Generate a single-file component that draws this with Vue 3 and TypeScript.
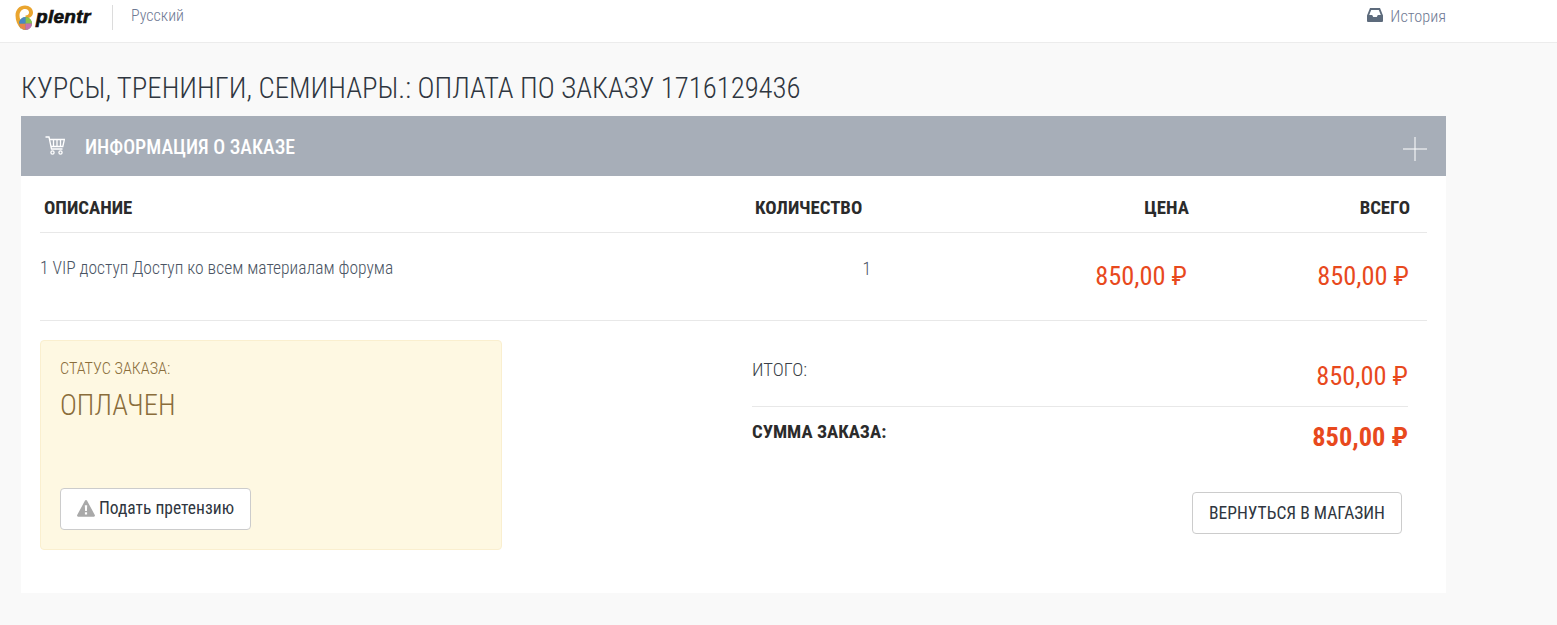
<script setup lang="ts">
import { ref } from 'vue'

interface OrderItem {
  name: string
  qty: number
  price: string
  total: string
}

const orderNumber = ref('1716129436')
const items = ref<OrderItem[]>([
  { name: '1 VIP доступ Доступ ко всем материалам форума', qty: 1, price: '850,00 ₽', total: '850,00 ₽' },
])
</script>

<template>
  <header class="topbar">
    <div class="topbar-left">
      <a class="logo">
        <svg width="19" height="26" viewBox="0 0 19 26">
          <path d="M10 0.5 C4.5 0.5 0.5 4.5 0.5 10.5 C0.5 15.5 2.5 20 6 24 L8 19 C5.5 16 4.5 13 4.5 10.5 C4.5 6.5 7 4 10 4 C12.5 4 14 5.5 14 7.5 C14 9.5 12.5 10.5 10.5 10.5 L10.5 13 C15 13.5 18 11 18 7.5 C18 3.5 14.5 0.5 10 0.5 Z" fill="#eaa52f" />
          <circle cx="10.5" cy="18.5" r="6.5" fill="#5aa469" />
          <path d="M10.5 12 A6.5 6.5 0 0 1 17 18.5 L10.5 18.5 Z" fill="#8bc34a" />
          <path d="M10.5 18.5 L10.5 25 A6.5 6.5 0 0 1 4 18.5 Z" fill="#e8854a" />
          <path d="M10.5 18.5 L4 18.5 A6.5 6.5 0 0 1 10.5 12 Z" fill="#4a86c5" />
          <path d="M10.5 18.5 L17 18.5 A6.5 6.5 0 0 1 10.5 25 Z" fill="#c96fb0" />
        </svg>
        <span class="logo-text">plentr</span>
      </a>
      <span class="lang">Русский</span>
    </div>
    <a class="history">
      <svg class="inbox" width="16" height="14" viewBox="0 0 16 14">
        <path fill="#5d6b7c" fill-rule="evenodd" d="M3 0 H13 L16 7.5 V13 A1 1 0 0 1 15 14 H1 A1 1 0 0 1 0 13 V7.5 Z M4.2 2 L2.2 7 H5.2 L6.2 9 H9.8 L10.8 7 H13.8 L11.8 2 Z" />
      </svg>
      История
    </a>
  </header>

  <main class="page">
    <h1 class="title">Курсы, тренинги, семинары.: Оплата по заказу {{ orderNumber }}</h1>

    <section class="panel">
      <div class="panel-head">
        <div class="panel-name">
          <svg class="cart" width="20" height="19" viewBox="0 0 20 19" fill="none" stroke="#fff" stroke-width="1.3">
            <path d="M0.5 1 H4 L6.5 13 H17.5" />
            <path d="M4.6 3.5 H19.4 L17.8 10.5 H6" />
            <path d="M8.5 3.5 V10.5 M12 3.5 V10.5 M15.5 3.5 V10.5" />
            <circle cx="7.5" cy="16.5" r="1.6" />
            <circle cx="15.5" cy="16.5" r="1.6" />
          </svg>
          <span>Информация о заказе</span>
        </div>
        <svg class="plus" width="24" height="24" viewBox="0 0 24 24">
          <path d="M0 12 H24 M12 0 V24" stroke="#fff" stroke-width="1" />
        </svg>
      </div>

      <div class="panel-body">
        <div class="row row-head">
          <div class="col-name">Описание</div>
          <div class="col-qty">Количество</div>
          <div class="col-price">Цена</div>
          <div class="col-total">Всего</div>
        </div>
        <div v-for="item in items" :key="item.name" class="row row-item">
          <div class="col-name">{{ item.name }}</div>
          <div class="col-qty">{{ item.qty }}</div>
          <div class="col-price money">{{ item.price }}</div>
          <div class="col-total money">{{ item.total }}</div>
        </div>

        <div class="bottom">
          <div class="status">
            <div class="status-label">Статус заказа:</div>
            <div class="status-value">Оплачен</div>
            <button class="btn btn-claim">
              <svg class="warn" width="18" height="17" viewBox="0 0 18 17">
                <path fill="#a9a9a9" fill-rule="evenodd" d="M9 0 C9.5 0 9.9 0.3 10.1 0.7 L17.8 15 C18.2 15.8 17.7 16.7 16.9 16.7 H1.1 C0.3 16.7 -0.2 15.8 0.2 15 L7.9 0.7 C8.1 0.3 8.5 0 9 0 Z M7.8 5.2 L8.1 11 H9.9 L10.2 5.2 Z M7.9 12.3 V14.4 H10.1 V12.3 Z" />
              </svg>
              Подать претензию
            </button>
          </div>

          <div class="summary">
            <div class="sum-row">
              <span class="sum-label">Итого:</span>
              <span class="money">850,00 ₽</span>
            </div>
            <div class="sum-row sum-total">
              <span class="sum-label">Сумма заказа:</span>
              <span class="money">850,00 ₽</span>
            </div>
            <div class="actions">
              <button class="btn btn-back">Вернуться в магазин</button>
            </div>
          </div>
        </div>
      </div>
    </section>
  </main>
</template>

<style>
html, body {
  background: #f9f9f9;
}
</style>

<style scoped>
.topbar {
  box-sizing: border-box;
  height: 43px;
  background: #fff;
  border-bottom: 1px solid #ececec;
  display: flex;
  justify-content: space-between;
  padding: 0 111px 0 15px;
  font-family: Roboto, "Liberation Sans", sans-serif;
  font-stretch: 75%;
}
.topbar-left {
  display: flex;
  align-items: flex-start;
}
.logo {
  display: flex;
  align-items: center;
  width: 98px;
  border-right: 1px solid #dcdcdc;
  margin-top: 5px;
  height: 25px;
  box-sizing: border-box;
  gap: 2px;
}
.logo-text {
  font-family: "Liberation Sans", sans-serif;
  font-weight: 700;
  font-style: italic;
  font-size: 19px;
  letter-spacing: 0.3px;
  color: #111;
  -webkit-text-stroke: 0.7px #111;
  margin-top: -1px;
}
.lang {
  margin-left: 18px;
  margin-top: 6px;
  font-size: 16px;
  font-weight: 300;
  color: #6f7a94;
}
.history {
  display: flex;
  align-items: center;
  gap: 7px;
  height: 32px;
  font-size: 16.3px;
  font-weight: 300;
  color: #6f7a94;
}
.inbox {
  margin-top: -2px;
}
.page {
  padding: 0 111px 32px 21px;
  font-family: Roboto, "Liberation Sans", sans-serif;
  font-stretch: 75%;
}
.title {
  margin: 0;
  padding-top: 27px;
  height: 73px;
  box-sizing: border-box;
  font-size: 28.77px;
  line-height: 36px;
  font-weight: 300;
  color: #2f3640;
  text-transform: uppercase;
}
.panel {
  background: #fff;
  height: 477px;
}
.panel-head {
  height: 60px;
  background: #a7aeb8;
  color: #fff;
  display: flex;
  align-items: center;
  justify-content: space-between;
  padding: 0 19px 0 25px;
}
.panel-name {
  display: flex;
  align-items: center;
  gap: 20px;
  font-size: 19.8px;
  font-weight: 500;
  text-transform: uppercase;
}
.panel-name span {
  margin-top: 3px;
}
.cart {
  margin-top: -2px;
  margin-left: -1px;
}
.plus {
  margin-top: 6px;
}
.panel-body {
  padding: 0 19px;
}
.row {
  display: flex;
  border-bottom: 1px solid #e8e8e8;
}
.row-head {
  height: 57px;
  padding-top: 7px;
  box-sizing: border-box;
  align-items: center;
  font-size: 18.8px;
  font-weight: 700;
  color: #2b2b2b;
  text-transform: uppercase;
}
.row-head .col-name {
  padding-left: 4px;
  box-sizing: border-box;
}
.row-item {
  height: 88px;
  box-sizing: border-box;
  font-size: 17.5px;
  font-weight: 300;
  color: #4a5463;
  padding-top: 25px;
}
.col-name {
  width: 715px;
}
.col-qty {
  width: 116px;
}
.row-item .col-qty {
  text-align: right;
  padding-top: 1px;
}
.col-price {
  width: 318px;
  text-align: right;
  padding-right: 2px;
  box-sizing: border-box;
}
.col-total {
  width: 221px;
  text-align: right;
  padding-right: 1px;
  box-sizing: border-box;
}
.row-head .col-price,
.row-head .col-total {
  padding-right: 0;
}
.money {
  font-size: 26.4px;
  color: #e8491d;
  font-weight: 400;
  line-height: 28px;
}
.row-item .money {
  padding-top: 4px;
}
.bottom {
  display: flex;
  justify-content: space-between;
  padding-top: 19px;
}
.status {
  box-sizing: border-box;
  width: 462px;
  height: 210px;
  background: #fef8e2;
  border: 1px solid #faefcf;
  border-radius: 4px;
  padding: 19px;
  color: #8a6d3b;
  display: flex;
  flex-direction: column;
  align-items: flex-start;
  text-transform: uppercase;
}
.status-label {
  font-size: 16.2px;
  font-weight: 300;
  line-height: 18px;
}
.status-value {
  font-size: 28.6px;
  font-weight: 300;
  line-height: 36px;
  margin-top: 9px;
}
.btn {
  background: #fff;
  border: 1px solid #ccc;
  border-radius: 4px;
  font-family: inherit;
  font-stretch: inherit;
  color: #2f3640;
  font-size: 17.5px;
  font-weight: 400;
}
.btn-claim {
  margin-top: auto;
  height: 42px;
  width: 191px;
  display: flex;
  align-items: center;
  justify-content: center;
  gap: 4px;
  text-transform: none;
  padding: 0 0 2px;
}
.warn {
  margin-top: 1px;
}
.summary {
  width: 656px;
  margin-right: 19px;
}
.sum-row {
  display: flex;
  justify-content: space-between;
  border-bottom: 1px solid #e8e8e8;
  height: 67px;
  box-sizing: border-box;
  font-size: 18.7px;
  font-weight: 300;
  color: #3a3f48;
  text-transform: uppercase;
  padding-top: 19px;
}
.sum-row .money {
  padding-top: 3px;
}
.sum-total {
  border-bottom: none;
  height: 85px;
  padding-top: 14px;
  font-weight: 700;
  color: #2b2b2b;
}
.sum-total .money {
  font-weight: 700;
  padding-top: 2px;
}
.actions {
  display: flex;
  justify-content: flex-end;
  padding-right: 6px;
}
.btn-back {
  height: 42px;
  width: 210px;
  padding: 0;
  text-transform: uppercase;
}
</style>
